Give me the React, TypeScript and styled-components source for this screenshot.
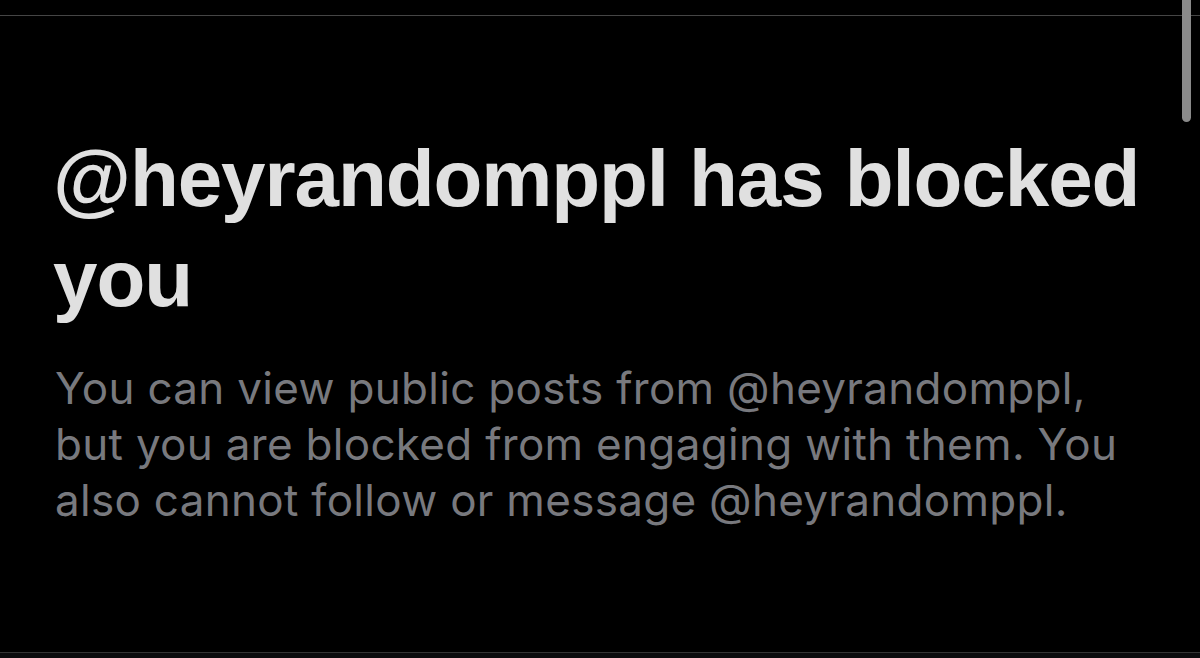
import styled, { createGlobalStyle } from "styled-components";

const GlobalStyle = createGlobalStyle`
  html, body {
    margin: 0;
    padding: 0;
    background: #000000;
  }
`;

const Page = styled.div`
  position: relative;
  display: flex;
  flex-direction: column;
  width: 1200px;
  height: 658px;
  background: #000000;
  overflow: hidden;
`;

const TopBar = styled.div`
  height: 15px;
  border-bottom: 1px solid #454545;
  flex-shrink: 0;
`;

const Content = styled.main`
  flex: 1;
  padding: 113px 40px 0 53px;
`;

const Title = styled.h1`
  margin: 0;
  font-family: "Liberation Sans", Arial, sans-serif;
  font-size: 80px;
  font-weight: 700;
  line-height: 100px;
  letter-spacing: -1.1px;
  color: #e0e0e0;
`;

const Description = styled.p`
  margin: 31px 0 0 2px;
  width: 1100px;
  font-family: Inter, "Noto Sans", sans-serif;
  font-size: 44px;
  font-weight: 400;
  line-height: 56px;
  letter-spacing: 0.3px;
  color: #78797e;
`;

const BottomBar = styled.div`
  height: 5px;
  border-top: 1px solid #343434;
  background: #0b0b0d;
  flex-shrink: 0;
`;

const Scrollbar = styled.div`
  position: absolute;
  top: 0;
  left: 1182px;
  width: 9px;
  height: 122px;
  border-radius: 0 0 5px 5px;
  background: #8a8a8a;
`;

export default function App() {
  return (
    <>
      <GlobalStyle />
      <Page>
        <TopBar />
        <Content>
          <Title>
            @heyrandomppl has blocked
            <br />
            you
          </Title>
          <Description>
            You can view public posts from @heyrandomppl,
            <br />
            but you are blocked from engaging with them. You
            <br />
            also cannot follow or message @heyrandomppl.
          </Description>
        </Content>
        <BottomBar />
        <Scrollbar />
      </Page>
    </>
  );
}
